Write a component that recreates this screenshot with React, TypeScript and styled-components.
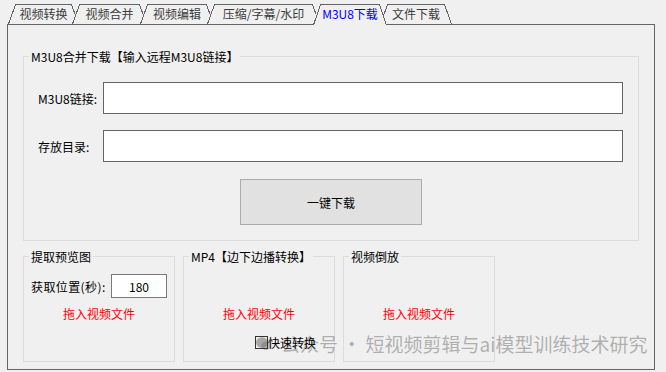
import styled, { createGlobalStyle } from 'styled-components';

const EstiloGlobal = createGlobalStyle`
  html, body {
    margin: 0;
    padding: 0;
    background: #f0f0f0;
  }
  body {
    font-family: "Noto Sans CJK SC", "Liberation Sans", sans-serif;
    font-size: 12px;
    color: #000;
  }
`

const Janela = styled.div`
  position: relative;
  width: 666px;
  height: 372px;
  overflow: hidden;
  background: #f0f0f0;
`
const BarraAbas = styled.div`
  display: flex;
  align-items: flex-end;
  height: 24px;
  padding-left: 8px;
`
const Aba = styled.div<{ $w: number; $ativa?: boolean }>`
  position: relative;
  z-index: ${p => (p.$ativa ? 3 : 1)};
  width: ${p => p.$w}px;
  height: ${p => (p.$ativa ? 21 : 20)}px;
  margin-bottom: ${p => (p.$ativa ? -1 : 0)}px;
  margin-left: -7px;
  display: flex;
  justify-content: center;
  font-size: 12px;
  line-height: 20px;
  color: ${p => (p.$ativa ? '#0000ff' : '#3c3c3c')};
  &:first-child { margin-left: 0; }
  svg { position: absolute; left: 0; top: 0; }
  span { position: relative; }
`
const Painel = styled.div`
  margin-left: 7px;
  width: 648px;
  height: 346px;
  box-sizing: border-box;
  border: 1px solid #646464;
  padding: 25px 15px 0;
  display: flex;
  flex-direction: column;
`
const Grupo = styled.fieldset<{ $w: number; $h: number }>`
  margin: 0;
  padding: 0;
  min-width: 0;
  width: ${p => p.$w}px;
  height: ${p => p.$h}px;
  box-sizing: border-box;
  border: 1px solid #dcdcdc;
`
const Titulo = styled.legend`
  margin-left: 5px;
  padding: 0 2px;
  font-size: 12px;
  line-height: 13px;
`
const CorpoDownload = styled.div`
  display: flex;
  flex-direction: column;
  padding: 19px 15px 0 14px;
`
const Linha = styled.div<{ $mb?: number }>`
  display: grid;
  grid-template-columns: 65px 520px;
  align-items: center;
  margin-bottom: ${p => p.$mb ?? 0}px;
`
const Rotulo = styled.label`
  font-size: 12px;
  white-space: nowrap;
`
const Campo = styled.input`
  height: 32px;
  box-sizing: border-box;
  border: 1px solid #646464;
  background: #fff;
  outline: none;
  margin: 0;
  font: inherit;
`
const Botao = styled.button`
  align-self: center;
  width: 182px;
  height: 46px;
  margin-left: 1px;
  box-sizing: border-box;
  border: 1px solid #adadad;
  background: #e1e1e1;
  font-family: inherit;
  font-size: 12px;
  color: #000;
`
const LinhaInferior = styled.div`
  display: flex;
  gap: 8px;
  margin-top: 9px;
`
const CorpoCaixa = styled.div`
  display: grid;
  grid-template-rows: 24px 16px auto;
  row-gap: 8px;
  padding: 11px 0 0 7px;
`
const Opcao = styled.div`
  display: grid;
  grid-template-columns: 80px 56px;
  align-items: center;
  white-space: nowrap;
`
const RotuloOpcao = styled.label`
  letter-spacing: 0.4px;
`
const CampoPequeno = styled.input`
  width: 56px;
  height: 24px;
  box-sizing: border-box;
  margin: 0;
  border: 1px solid #7a7a7a;
  background: #fff;
  outline: none;
  text-align: center;
  font: inherit;
  font-size: 12px;
`
const Aviso = styled.div`
  margin-left: -7px;
  text-align: center;
  color: #ff0000;
  line-height: 16px;
`
// fica por cima da marca d'agua, como no original
const Marcar = styled.div`
  display: flex;
  align-items: center;
  margin: 4px 0 0 64px;
  position: relative;
  z-index: 4;
`
const Caixinha = styled.span`
  width: 13px;
  height: 13px;
  box-sizing: border-box;
  border: 1px solid #333;
  background: transparent;
`
const MarcaDagua = styled.div`
  position: absolute;
  left: 256px;
  top: 333px;
  z-index: 2;
  display: flex;
  align-items: center;
  gap: 10px;
  font-family: "Noto Sans CJK SC", sans-serif;
  font-size: 19px;
  line-height: 22px;
  color: rgba(110, 110, 110, 0.5);
  white-space: nowrap;
  pointer-events: none;
`

const abas = [
  { nome: '视频转换', w: 71 },
  { nome: '视频合并', w: 75 },
  { nome: '视频编辑', w: 74 },
  { nome: '压缩/字幕/水印', w: 113 },
  { nome: 'M3U8下载', w: 74, ativa: true },
  { nome: '文件下载', w: 72 },
];

const FormaAba = ({ w, h }: { w: number; h: number }) => (
  <svg width={w} height={h} shapeRendering="crispEdges">
    <polygon points={`0,${h} 7,0 ${w - 7},0 ${w},${h}`} fill="#f0f0f0" />
    <polyline
      points={`0.5,${h} 7.5,0.5 ${w - 7.5},0.5 ${w - 0.5},${h}`}
      fill="none"
      stroke="#646464"
    />
  </svg>
);

// icone do wechat, meio apagado
const IconeWechat = () => (
  <svg width="15" height="14" viewBox="0 0 15 14">
    <ellipse cx="6" cy="5.5" rx="6" ry="5.2" fill="rgba(110,110,110,0.55)" />
    <ellipse cx="10" cy="8.8" rx="4.8" ry="4.2" fill="rgba(110,110,110,0.45)" />
  </svg>
);

function App() {
  return (
    <Janela>
      <EstiloGlobal />
      <BarraAbas>
        {abas.map(a => (
          <Aba key={a.nome} $w={a.w} $ativa={a.ativa}>
            <FormaAba w={a.w} h={a.ativa ? 21 : 20} />
            <span>{a.nome}</span>
          </Aba>
        ))}
      </BarraAbas>
      <Painel>
        <Grupo $w={616} $h={191}>
          <Titulo>M3U8合并下载【输入远程M3U8链接】</Titulo>
          <CorpoDownload>
            <Linha $mb={16}>
              <Rotulo>M3U8链接:</Rotulo>
              <Campo />
            </Linha>
            <Linha $mb={17}>
              <Rotulo>存放目录:</Rotulo>
              <Campo />
            </Linha>
            <Botao>一键下载</Botao>
          </CorpoDownload>
        </Grupo>
        <LinhaInferior>
          <Grupo $w={152} $h={112}>
            <Titulo>提取预览图</Titulo>
            <CorpoCaixa>
              <Opcao>
                <RotuloOpcao>获取位置(秒):</RotuloOpcao>
                <CampoPequeno defaultValue="180" />
              </Opcao>
              <Aviso>拖入视频文件</Aviso>
            </CorpoCaixa>
          </Grupo>
          <Grupo $w={152} $h={112}>
            <Titulo>MP4【边下边播转换】</Titulo>
            <CorpoCaixa>
              <Opcao />
              <Aviso>拖入视频文件</Aviso>
              <Marcar>
                <Caixinha />
                快速转换
              </Marcar>
            </CorpoCaixa>
          </Grupo>
          <Grupo $w={152} $h={112}>
            <Titulo>视频倒放</Titulo>
            <CorpoCaixa>
              <Opcao />
              <Aviso>拖入视频文件</Aviso>
            </CorpoCaixa>
          </Grupo>
        </LinhaInferior>
      </Painel>
      <MarcaDagua>
        <IconeWechat />
        <span>公众号 · 短视频剪辑与ai模型训练技术研究</span>
      </MarcaDagua>
    </Janela>
  );
}

export default App;
